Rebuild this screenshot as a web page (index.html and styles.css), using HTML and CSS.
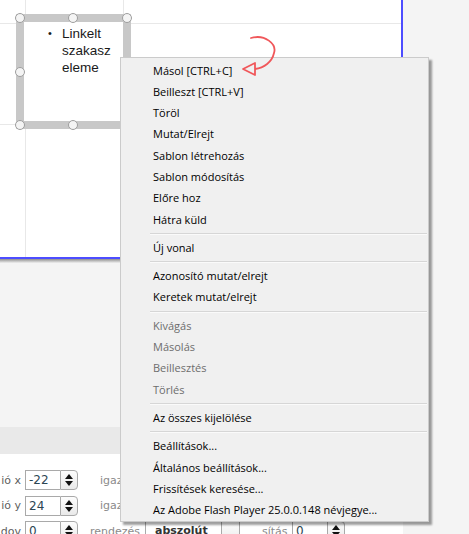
FILE: index.html
```html
<!DOCTYPE html>
<html>
<head>
<meta charset="utf-8">
<link rel="stylesheet" href="styles.css">
</head>
<body>
<div class="app">
  <div class="main">
    <div class="canvas">
      <div class="gv gv1"></div>
      <div class="gv gv2"></div>
      <div class="gh gh1"></div>
      <div class="gh gh2"></div>
      <div class="frame">
        <div class="bl"><span class="dot">•</span><span class="btxt">Linkelt<br>szakasz<br>eleme</span></div>
      </div>
      <span class="hd x1 y1"></span>
      <span class="hd x2 y1"></span>
      <span class="hd x3 y1"></span>
      <span class="hd x1 y2"></span>
      <span class="hd x3 y2"></span>
      <span class="hd x1 y3"></span>
      <span class="hd x2 y3"></span>
      <span class="hd x3 y3"></span>
    </div>
    <div class="shadow"></div>
    <div class="mid"></div>
    <div class="band"></div>
    <div class="form">
      <div class="row">
        <span class="lbl">ió x</span>
        <span class="num">-22</span>
        <span class="spin"><span class="up"></span><span class="dn"></span></span>
        <span class="gtxt igaz">igazítás</span>
      </div>
      <div class="row">
        <span class="lbl">ió y</span>
        <span class="num">24</span>
        <span class="spin"><span class="up"></span><span class="dn"></span></span>
        <span class="gtxt igaz">igazítás</span>
      </div>
      <div class="row">
        <span class="lbl">dov</span>
        <span class="num">0</span>
        <span class="spin"><span class="up"></span><span class="dn"></span></span>
        <span class="gtxt rend">rendezés</span>
        <span class="sel"><span class="seltxt">abszolút</span><span class="selbtn"></span></span>
        <span class="gtxt sit">sítás</span>
        <span class="num n2">0</span>
        <span class="spin"><span class="up"></span><span class="dn"></span></span>
      </div>
    </div>
  </div>
  <div class="side"></div>
</div>

<div class="menu">
  <div class="item">Másol [CTRL+C]</div>
  <div class="item">Beilleszt [CTRL+V]</div>
  <div class="item">Töröl</div>
  <div class="item">Mutat/Elrejt</div>
  <div class="item">Sablon létrehozás</div>
  <div class="item">Sablon módosítás</div>
  <div class="item">Előre hoz</div>
  <div class="item">Hátra küld</div>
  <div class="sep"></div>
  <div class="item">Új vonal</div>
  <div class="sep"></div>
  <div class="item">Azonosító mutat/elrejt</div>
  <div class="item">Keretek mutat/elrejt</div>
  <div class="sep"></div>
  <div class="item dis">Kivágás</div>
  <div class="item dis">Másolás</div>
  <div class="item dis">Beillesztés</div>
  <div class="item dis">Törlés</div>
  <div class="sep"></div>
  <div class="item">Az összes kijelölése</div>
  <div class="sep"></div>
  <div class="item">Beállítások...</div>
  <div class="item">Általános beállítások...</div>
  <div class="item">Frissítések keresése...</div>
  <div class="item">Az Adobe Flash Player 25.0.0.148 névjegye...</div>
</div>

<svg class="arrow" viewBox="236 32 44 48" width="44" height="48">
  <path d="M251 38 C265 34 277 44 274 53 C272 62 264 68 255 69" fill="none" stroke="#f0575a" stroke-width="1.8" stroke-linecap="round"/>
  <polygon points="243,69 255,63 255,75" fill="#f0f0f0" stroke="#f0575a" stroke-width="1.8" stroke-linejoin="round"/>
</svg>
</body>
</html>
```
FILE: styles.css
```css
html, body {
  margin: 0;
  padding: 0;
}
body {
  width: 469px;
  height: 534px;
  overflow: hidden;
  position: relative;
  background: #f4f4f4;
  font-family: "DejaVu Sans", sans-serif;
}
.app {
  display: flex;
  height: 534px;
  overflow: hidden;
}
.main {
  width: 403px;
  display: flex;
  flex-direction: column;
  overflow: hidden;
}
.main > * {
  flex-shrink: 0;
}
.side {
  flex: 1;
  background: #f4f4f4;
}
.canvas {
  position: relative;
  width: 401px;
  height: 257px;
  background: #ffffff;
  border-right: 2px solid #4d4dff;
  border-bottom: 2px solid #4d4dff;
  overflow: hidden;
}
.gv {
  position: absolute;
  top: 0;
  bottom: 0;
  width: 1px;
  background: #e8e8e8;
}
.gv1 { left: 25px; }
.gv2 { left: 123px; }
.gh {
  position: absolute;
  left: 0;
  right: 0;
  height: 1px;
  background: #e8e8e8;
}
.gh1 { top: 23px; }
.gh2 { top: 124px; }
.frame {
  position: absolute;
  left: 16px;
  top: 14px;
  width: 115px;
  height: 115px;
  box-sizing: border-box;
  border: 8px solid #c8c8c8;
  background: #ffffff;
  padding: 3px 0 0 24px;
}
.bl {
  display: flex;
  font-family: "Liberation Sans", Arial, sans-serif;
  font-size: 13.5px;
  line-height: 17px;
  color: #1a1a1a;
}
.dot {
  width: 14px;
  font-size: 11px;
}
.hd {
  position: absolute;
  width: 10px;
  height: 10px;
  box-sizing: border-box;
  border-radius: 50%;
  background: #f4f4f4;
  border: 1px solid #9e9e9e;
}
.x1 { left: 15px; }
.x2 { left: 68px; }
.x3 { left: 122px; }
.y1 { top: 13px; }
.y2 { top: 67px; }
.y3 { top: 120px; }
.shadow {
  width: 403px;
  height: 4px;
  background: linear-gradient(#8f8f8f, #c9c9c9 60%, #f0f0f0);
}
.mid {
  height: 164px;
  background: #f4f4f4;
}
.band {
  height: 27px;
  background: #e9e9e9;
}
.form {
  height: 100px;
  background: #ffffff;
  padding-top: 16px;
  box-sizing: border-box;
  display: flex;
  flex-direction: column;
  gap: 5.5px;
}
.row {
  display: flex;
  align-items: center;
  height: 20px;
  flex-shrink: 0;
}
.lbl {
  width: 21px;
  margin-right: 4px;
  text-align: right;
  white-space: nowrap;
  font-size: 11px;
  color: #606060;
}
.num {
  width: 35px;
  height: 20px;
  box-sizing: border-box;
  border: 1px solid #a9a9a9;
  border-right: none;
  padding-left: 3px;
  font-size: 12px;
  line-height: 18px;
  color: #2c4653;
  background: #fff;
}
.spin {
  width: 18px;
  height: 20px;
  box-sizing: border-box;
  border: 1px solid #a9a9a9;
  border-radius: 0 4px 4px 0;
  background: linear-gradient(#fdfdfd, #e9e9e9);
  display: flex;
  flex-direction: column;
  align-items: center;
  justify-content: space-around;
  padding: 2px 0;
}
.up {
  width: 0;
  height: 0;
  border-left: 4px solid transparent;
  border-right: 4px solid transparent;
  border-bottom: 5px solid #111;
}
.dn {
  width: 0;
  height: 0;
  border-left: 4px solid transparent;
  border-right: 4px solid transparent;
  border-top: 5px solid #111;
}
.gtxt {
  font-size: 11px;
  color: #8a8a8a;
  white-space: nowrap;
}
.igaz {
  margin-left: 22px;
}
.rend {
  margin-left: 12px;
  width: 52px;
  margin-right: 3px;
}
.sel {
  width: 95px;
  height: 20px;
  box-sizing: border-box;
  border: 1px solid #a9a9a9;
  display: flex;
  background: #fff;
}
.seltxt {
  flex: 1;
  padding-left: 9px;
  font-size: 11px;
  font-weight: bold;
  line-height: 18px;
  color: #333;
}
.selbtn {
  width: 17px;
  border-left: 1px solid #a9a9a9;
  background: linear-gradient(#fdfdfd, #ececec);
}
.sit {
  margin-left: 22px;
  width: 30px;
}
.n2 {
  width: 35px;
}
.menu {
  position: absolute;
  left: 120px;
  top: 57px;
  width: 309px;
  box-sizing: border-box;
  border: 1px solid #cbcbcb;
  background: #f0f0f0;
  padding: 1.5px 0 1px;
  box-shadow: 3px 3px 2px rgba(0, 0, 0, 0.38);
  font-family: "Open Sans", sans-serif;
  font-size: 11px;
  color: #000;
}
.item {
  height: 21.3px;
  line-height: 21.3px;
  padding-left: 32px;
  white-space: nowrap;
}
.dis {
  color: #6d6d6d;
}
.sep {
  height: 7px;
  position: relative;
}
.sep::after {
  content: "";
  position: absolute;
  left: 29px;
  right: 1px;
  top: 3px;
  height: 1px;
  background: #d6d6d6;
  border-bottom: 1px solid #fafafa;
}
.arrow {
  position: absolute;
  left: 236px;
  top: 32px;
}
```
